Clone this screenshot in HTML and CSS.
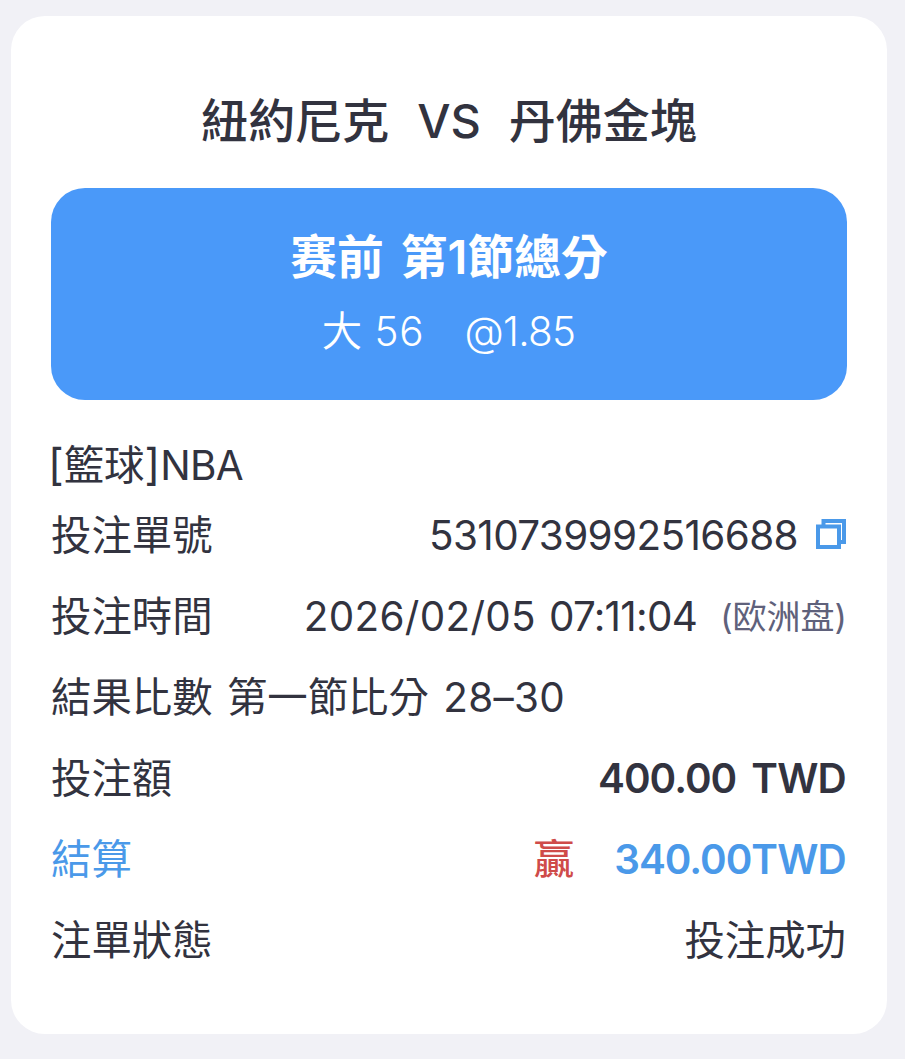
FILE: index.html
```html
<!DOCTYPE html>
<html lang="zh-Hant">
<head>
<meta charset="utf-8">
<title>注單</title>
<link rel="stylesheet" href="styles.css">
</head>
<body>
<main class="card">
  <h1 class="match"><span>紐約尼克</span><span class="vs">VS</span><span>丹佛金塊</span></h1>
  <section class="pick">
    <div class="pick-title"><span lang="zh-Hans">赛前</span><span>第<span class="one">1</span>節總分</span></div>
    <div class="pick-odds"><span class="line">大 <span class="line-num">56</span></span><span class="odds">@1.85</span></div>
  </section>
  <div class="league"><span class="bracket open">[</span>籃球<span class="bracket close">]</span><span class="nba">NBA</span></div>
  <div class="rows">
    <div class="row"><span>投注單號</span><span class="value"><span class="order">5310739992516688</span><svg class="copy" viewBox="0 0 30 30"><path d="M7.5 6V2H28v21h-5M2 7.5h21V28H2z"/></svg></span></div>
    <div class="row"><span>投注時間</span><span class="value"><span class="date">2026/02/05</span><span class="clock">07:11:04</span><span class="zone" lang="zh-Hans">(欧洲盘)</span></span></div>
    <div class="row"><span class="result">結果比數 第一節比分 <span class="score">28–30</span></span></div>
    <div class="row"><span>投注額</span><span class="amount"><span class="sum">400.00</span> <span class="unit">TWD</span></span></div>
    <div class="row settle"><span>結算</span><span class="value"><span class="win">贏</span><span class="payout"><span class="sum">340.00</span><span class="unit">TWD</span></span></span></div>
    <div class="row"><span>注單狀態</span><span>投注成功</span></div>
  </div>
</main>
</body>
</html>
```
FILE: styles.css
```css
* { box-sizing: border-box; }
body {
  margin: 0;
  height: 1059px;
  padding: 16px 18px 25px 11px;
  background: #f1f1f6;
  color: #32333f;
  font-family: Inter, "Noto Sans CJK TC", sans-serif;
  font-size: 40.4px;
  overflow: hidden;
}
[lang="zh-Hans"] { font-family: Inter, "Noto Sans CJK SC", sans-serif; }
.card {
  height: 1018px;
  padding: 73px 40px 0;
  border-radius: 34px;
  background: #fff;
  white-space: nowrap;
}
.match {
  display: flex;
  justify-content: center;
  gap: 28px;
  margin: 0;
  height: 63px;
  line-height: 63px;
  font-size: 47px;
  font-weight: 500;
}
.pick {
  height: 212px;
  margin-top: 36px;
  padding-top: 38px;
  border-radius: 34px;
  background: #4a99f9;
  color: #fff;
}
.pick-title {
  display: flex;
  justify-content: center;
  gap: 17px;
  height: 62px;
  line-height: 62px;
  font-size: 46.8px;
  font-weight: 700;
}
.one { font-weight: 600; }
.pick-odds {
  display: flex;
  justify-content: center;
  gap: 40px;
  height: 87px;
  margin-left: -1px;
  line-height: 87px;
  font-weight: 350;
}
.line { word-spacing: 1px; }
.line-num { letter-spacing: 0.8px; }
.odds { letter-spacing: -0.7px; }
.league { margin-top: 38px; height: 56.5px; line-height: 56px; }
.bracket {
  display: inline-block;
  font-size: 43px;
  line-height: 1;
}
.open { margin: 0 0 0 -3px; }
.close { margin: 0; }
.nba { letter-spacing: -0.7px; }
.row {
  display: flex;
  justify-content: space-between;
  height: 81px;
  padding-right: 1px;
  line-height: 81px;
}
.value { display: flex; align-items: center; }
.order { letter-spacing: -0.6px; }
.copy {
  width: 30px;
  height: 30px;
  margin: -2px 0 0 18px;
  fill: none;
  stroke: #4a99e9;
  stroke-width: 4;
}
.date { letter-spacing: 0.3px; }
.clock { margin-left: 13px; letter-spacing: -0.7px; }
.zone { margin: 0 -1px 0 23px; font-size: 34px; color: #5f617b; }
.result { word-spacing: 3px; }
.score { letter-spacing: 0.3px; }
.amount, .payout { font-weight: 600; }
.amount { word-spacing: 5px; }
.sum { letter-spacing: -1px; }
.unit { letter-spacing: -0.8px; }
.settle { color: #4a99e9; }
.win { margin-right: 40px; color: #cf4b49; font-weight: 500; }
```
